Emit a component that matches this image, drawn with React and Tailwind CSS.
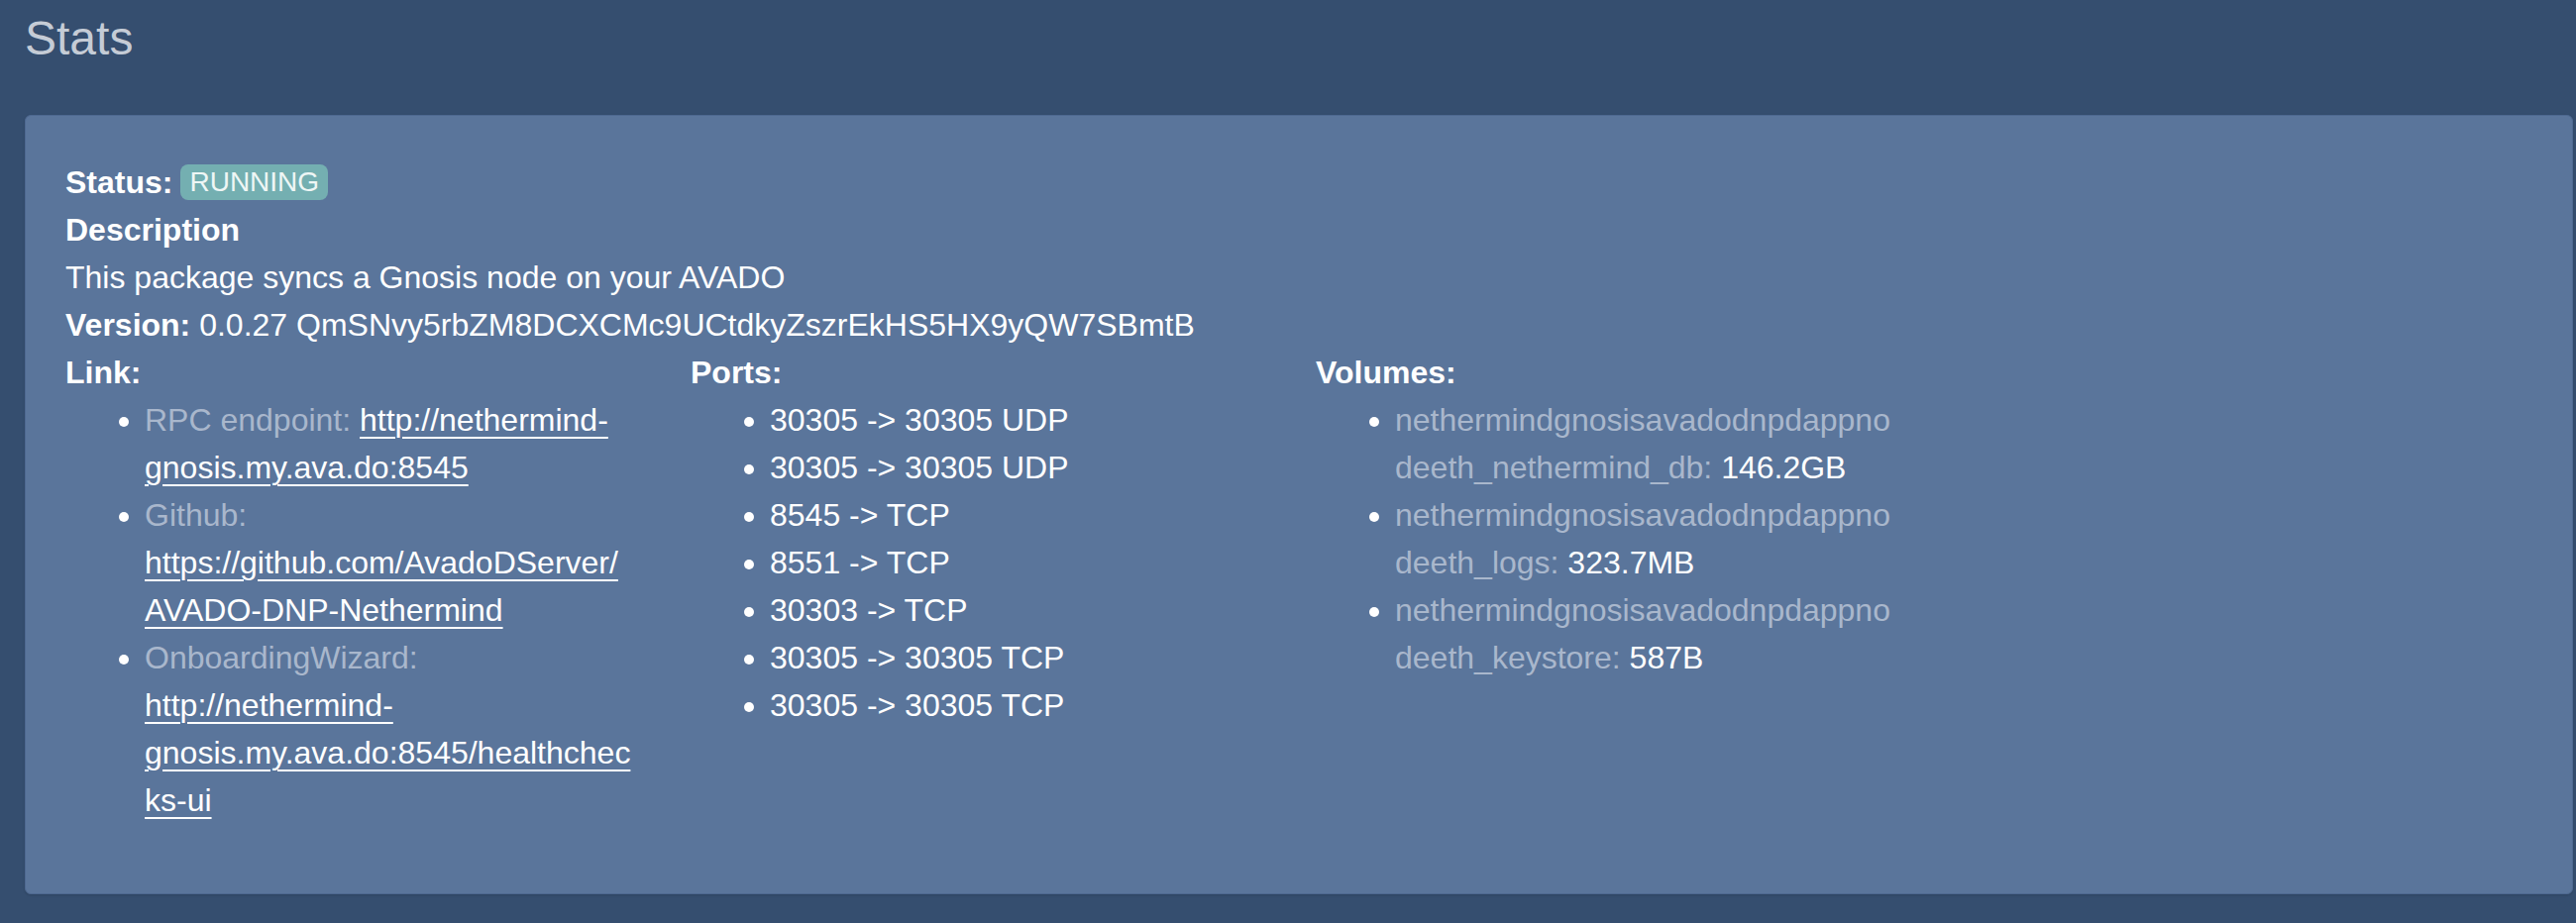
const links = [
  { label: 'RPC endpoint:', lines: ['http://nethermind-', 'gnosis.my.ava.do:8545'], inline: true },
  { label: 'Github:', lines: ['https://github.com/AvadoDServer/', 'AVADO-DNP-Nethermind'] },
  { label: 'OnboardingWizard:', lines: ['http://nethermind-', 'gnosis.my.ava.do:8545/healthchec', 'ks-ui'] },
]

const ports = [
  '30305 -> 30305 UDP',
  '30305 -> 30305 UDP',
  '8545 -> TCP',
  '8551 -> TCP',
  '30303 -> TCP',
  '30305 -> 30305 TCP',
  '30305 -> 30305 TCP',
]

const volumes = [
  { name: ['nethermindgnosisavadodnpdappno', 'deeth_nethermind_db:'], size: '146.2GB' },
  { name: ['nethermindgnosisavadodnpdappno', 'deeth_logs:'], size: '323.7MB' },
  { name: ['nethermindgnosisavadodnpdappno', 'deeth_keystore:'], size: '587B' },
]

const LinkItem = ({ label, lines, inline }) => (
  <li>
    <span className="text-[#a9b7cc]">{label}</span>
    {inline ? ' ' : <br />}
    <a href="#" className="text-white underline underline-offset-[6px] decoration-2">
      {lines.map((l, i) => (
        <span key={i}>
          {i > 0 && <br />}
          {l}
        </span>
      ))}
    </a>
  </li>
)

export default function App() {
  return (
    <div className="h-[932px] w-[2600px] overflow-hidden bg-[#354e6f] font-['Liberation_Sans',Arial,sans-serif]">
      <div className="pl-[25px] pt-[10px]">
        <h2 className="text-[48px] leading-[58px] text-[#c5ccd6]">Stats</h2>

        <div className="mt-[48px] w-[2572px] rounded-[6px] border border-[#4e6990] bg-[#5a759b] px-[40px] pt-[43px] pb-[38px] text-[32px] leading-[48px] text-white shadow-sm">
          <div className="flex items-center">
            <span className="font-bold">Status:</span>
            <span className="ml-[8px] rounded-[8px] bg-[#74afb1] px-[9px] text-[28px] leading-[36px] text-[#eef6f5]">
              RUNNING
            </span>
          </div>
          <div className="font-bold">Description</div>
          <div>This package syncs a Gnosis node on your AVADO</div>
          <div>
            <span className="font-bold">Version:</span> 0.0.27 QmSNvy5rbZM8DCXCMc9UCtdkyZszrEkHS5HX9yQW7SBmtB
          </div>

          <div className="grid grid-cols-[601px_601px_601px] gap-x-[30px]">
            <div>
              <div className="font-bold">Link:</div>
              <ul className="list-disc pl-[80px] mb-[32px]">
                {links.map((l) => (
                  <LinkItem key={l.label} {...l} />
                ))}
              </ul>
            </div>

            <div>
              <div className="font-bold">Ports:</div>
              <ul className="list-disc pl-[80px] mb-[32px]">
                {ports.map((p, i) => (
                  <li key={i}>{p}</li>
                ))}
              </ul>
            </div>

            <div>
              <div className="font-bold">Volumes:</div>
              <ul className="list-disc pl-[80px] mb-[32px]">
                {volumes.map((v, i) => (
                  <li key={i}>
                    <span className="text-[#a9b7cc]">
                      {v.name[0]}
                      <br />
                      {v.name[1]}
                    </span>{' '}
                    {v.size}
                  </li>
                ))}
              </ul>
            </div>
          </div>
        </div>
      </div>
    </div>
  )
}
